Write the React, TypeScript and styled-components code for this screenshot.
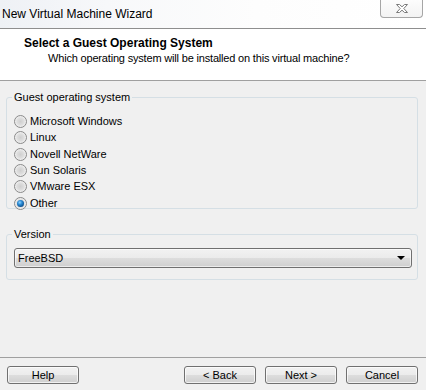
import React from 'react';
import styled, { createGlobalStyle } from 'styled-components';

const GlobalStyle = createGlobalStyle`
  html, body {
    margin: 0;
    padding: 0;
    background: #f0f0f0;
  }
  body {
    font-family: 'Liberation Sans', Arial, sans-serif;
    font-size: 11px;
    color: #000;
  }
`;

const systems = ['Microsoft Windows', 'Linux', 'Novell NetWare', 'Sun Solaris', 'VMware ESX', 'Other'];

const App = () => {
  return (
    <Window>
      <GlobalStyle />
      <TitleBar>
        <Title>New Virtual Machine Wizard</Title>
        <CloseButton>
          <svg width="12" height="9" viewBox="0 0 12 9">
            <polygon
              points="0.5,0.5 3.5,0.5 6,2.8 8.5,0.5 11.5,0.5 7.8,4.5 11.5,8.5 8.5,8.5 6,6.2 3.5,8.5 0.5,8.5 4.2,4.5"
              fill="#fff"
              stroke="#7a7a7a"
              strokeWidth="1"
              strokeLinejoin="round"
            />
          </svg>
        </CloseButton>
      </TitleBar>
      <Header>
        <HeaderTitle>Select a Guest Operating System</HeaderTitle>
        <HeaderSub>Which operating system will be installed on this virtual machine?</HeaderSub>
      </Header>
      <Content>
        <Group>
          <Legend>Guest operating system</Legend>
          <RadioList>
            {systems.map((name) => (
              <RadioRow key={name}>
                <Radio $checked={name === 'Other'} />
                <span>{name}</span>
              </RadioRow>
            ))}
          </RadioList>
        </Group>
        <Group $second>
          <Legend>Version</Legend>
          <Select>
            <span>FreeBSD</span>
            <Arrow />
          </Select>
        </Group>
      </Content>
      <Footer>
        <Button>Help</Button>
        <Spacer />
        <Button>&lt; Back</Button>
        <Button>Next &gt;</Button>
        <Button>Cancel</Button>
      </Footer>
    </Window>
  );
};

export default App;

const Window = styled.div`
  width: 426px;
  height: 390px;
  display: flex;
  flex-direction: column;
  background: #f0f0f0;
  overflow: hidden;
`;

const TitleBar = styled.div`
  height: 28px;
  flex-shrink: 0;
  display: flex;
  justify-content: space-between;
  align-items: flex-start;
  padding: 0 3px 0 2px;
  border-bottom: 1px solid #8e8e8e;
  background: linear-gradient(90deg, #eef1f5 0%, #f7f8fa 25%, #fdfdfd 60%, #ffffff 100%);
`;

const Title = styled.div`
  line-height: 28px;
  font-size: 12px;
  color: #000;
`;

const CloseButton = styled.div`
  width: 43px;
  height: 19px;
  margin-top: -1px;
  display: flex;
  align-items: center;
  justify-content: center;
  border: 1px solid #a6a6a6;
  border-top: none;
  border-radius: 0 0 4px 4px;
  background: linear-gradient(#fdfdfd, #f3f3f3);
  box-sizing: border-box;
`;

const Header = styled.div`
  height: 52px;
  flex-shrink: 0;
  background: #fff;
  border-bottom: 1px solid #a0a0a0;
  padding: 7px 0 0 24px;
  box-sizing: border-box;
`;

const HeaderTitle = styled.div`
  font-weight: bold;
  font-size: 12px;
  line-height: 15px;
`;

const HeaderSub = styled.div`
  font-size: 11px;
  line-height: 15px;
  padding-left: 24px;
  letter-spacing: -0.18px;
`;

const Content = styled.div`
  flex: 1;
  padding: 9px 8px 0 6px;
`;

const Group = styled.fieldset<{ $second?: boolean }>`
  margin: ${(p) => (p.$second ? '18px' : '0')} 0 0 0;
  padding: ${(p) => (p.$second ? '6px 5px 11px 7px' : '10px 5px 0 7px')};
  border: 1px solid #d5dfe5;
  border-radius: 3px;
  min-width: 0;
`;

const Legend = styled.legend`
  padding: 0 2px;
  margin-left: -2px;
  line-height: 15px;
`;

const RadioList = styled.div`
  display: flex;
  flex-direction: column;
  gap: 3.35px;
  margin-bottom: -2px;
`;

const RadioRow = styled.div`
  height: 13px;
  display: flex;
  align-items: center;
  gap: 3px;
  line-height: 13px;
`;

const Radio = styled.span<{ $checked?: boolean }>`
  width: 13px;
  height: 13px;
  flex-shrink: 0;
  border-radius: 50%;
  box-sizing: border-box;
  border: 1px solid #8a8a8a;
  background: radial-gradient(circle at 50% 50%, #cfcfcf 0%, #dedede 45%, #f3f3f3 75%, #ffffff 100%);
  display: flex;
  align-items: center;
  justify-content: center;
  &::after {
    content: '';
    display: ${(p) => (p.$checked ? 'block' : 'none')};
    width: 7px;
    height: 7px;
    border-radius: 50%;
    background: radial-gradient(circle at 40% 35%, #8fd3ff 0%, #2a8ad4 35%, #0d4f8c 75%, #0a3463 100%);
  }
`;

const Select = styled.div`
  height: 20px;
  box-sizing: border-box;
  display: flex;
  align-items: center;
  justify-content: space-between;
  padding: 0 6px 0 3px;
  border: 1px solid #707070;
  border-radius: 3px;
  background: linear-gradient(#f2f2f2 0%, #ebebeb 50%, #dddddd 51%, #cfcfcf 100%);
  box-shadow: inset 0 0 0 1px rgba(255, 255, 255, 0.6);
`;

const Arrow = styled.span`
  width: 0;
  height: 0;
  border-left: 4px solid transparent;
  border-right: 4px solid transparent;
  border-top: 4px solid #000;
`;

const Footer = styled.div`
  height: 33px;
  flex-shrink: 0;
  box-sizing: border-box;
  border-top: 1px solid #a0a0a0;
  display: flex;
  align-items: flex-start;
  gap: 9px;
  padding: 8px 8px 0 7px;
`;

const Spacer = styled.div`
  flex: 1;
`;

const Button = styled.div`
  width: 72px;
  height: 18px;
  box-sizing: border-box;
  display: flex;
  align-items: center;
  justify-content: center;
  border: 1px solid #707070;
  border-radius: 3px;
  background: linear-gradient(#f2f2f2 0%, #ebebeb 50%, #dddddd 51%, #cfcfcf 100%);
  box-shadow: inset 0 0 0 1px rgba(255, 255, 255, 0.7);
  color: #000;
`;
